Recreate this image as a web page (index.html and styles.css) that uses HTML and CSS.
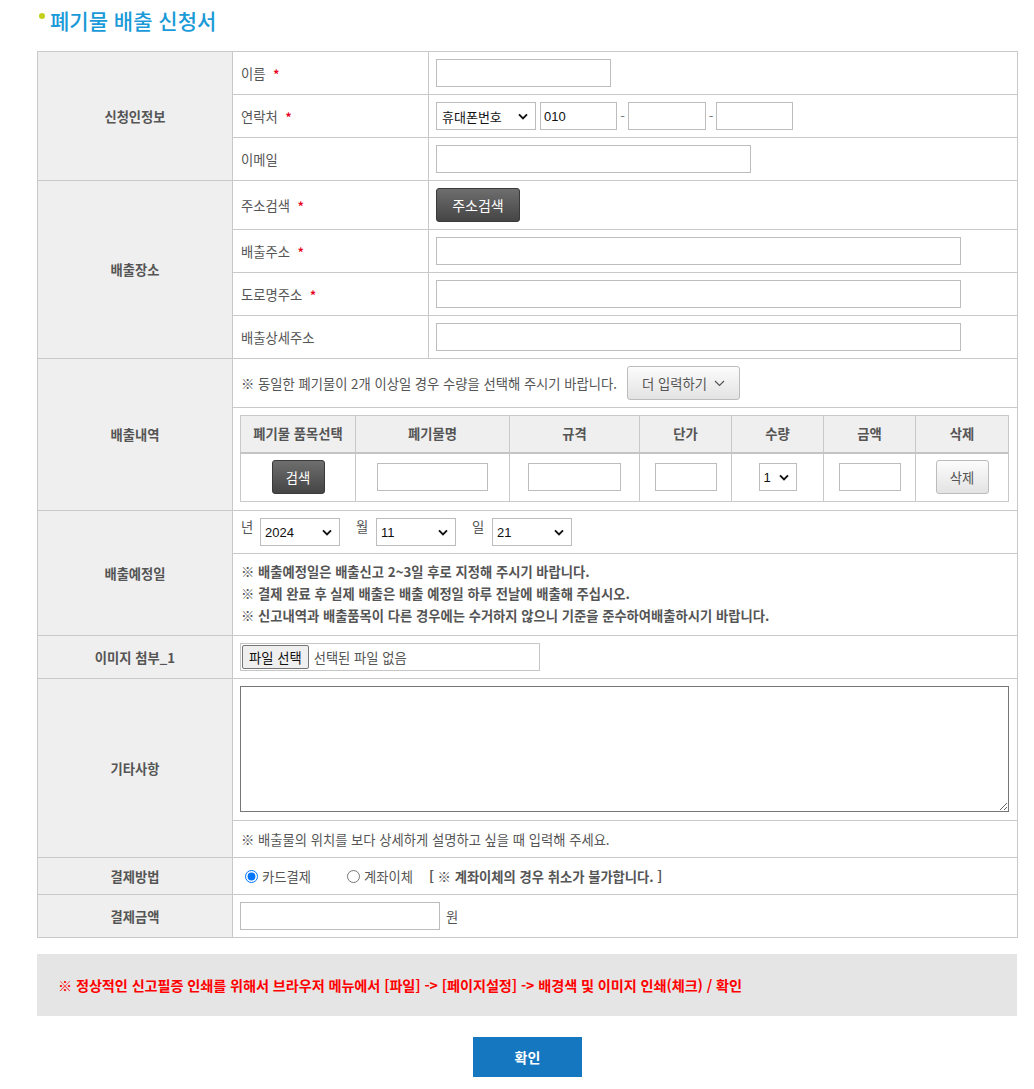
FILE: index.html
```html
<!DOCTYPE html>
<html lang="ko">
<head>
<meta charset="utf-8">
<title>폐기물 배출 신청서</title>
<link rel="stylesheet" href="styles.css">
</head>
<body>
<div class="wrap">
  <h2 class="title"><span class="dot"></span>폐기물 배출 신청서</h2>
  <table class="form">
    <colgroup><col class="c1"><col class="c2"><col class="c3"></colgroup>
    <tr>
      <th rowspan="3">신청인정보</th>
      <td class="lbl">이름 <span class="req">*</span></td>
      <td class="fld"><input class="in w174" type="text"></td>
    </tr>
    <tr>
      <td class="lbl">연락처 <span class="req">*</span></td>
      <td class="fld">
        <div class="row">
          <select class="sel w99"><option>휴대폰번호</option></select>
          <input class="in w76 ml5" type="text" value="010"><span class="dash">-</span><input class="in w77" type="text"><span class="dash d2">-</span><input class="in w76" type="text">
        </div>
      </td>
    </tr>
    <tr>
      <td class="lbl">이메일</td>
      <td class="fld"><input class="in w314" type="text"></td>
    </tr>
    <tr>
      <th rowspan="4">배출장소</th>
      <td class="lbl">주소검색 <span class="req">*</span></td>
      <td class="fld"><button class="btn-dark addr" type="button">주소검색</button></td>
    </tr>
    <tr>
      <td class="lbl">배출주소 <span class="req">*</span></td>
      <td class="fld"><input class="in w524" type="text"></td>
    </tr>
    <tr>
      <td class="lbl">도로명주소 <span class="req">*</span></td>
      <td class="fld"><input class="in w524" type="text"></td>
    </tr>
    <tr>
      <td class="lbl">배출상세주소</td>
      <td class="fld"><input class="in w524" type="text"></td>
    </tr>
    <tr>
      <th rowspan="2">배출내역</th>
      <td class="wide more-row" colspan="2">
        <div class="row">
          <span>※ 동일한 폐기물이 2개 이상일 경우 수량을 선택해 주시기 바랍니다.</span>
          <button class="btn-light more" type="button">더 입력하기 <svg width="11" height="7" viewBox="0 0 11 7"><path d="M1 1l4.5 4.5L10 1" fill="none" stroke="#555" stroke-width="1.2"/></svg></button>
        </div>
      </td>
    </tr>
    <tr>
      <td class="wide items-cell" colspan="2">
        <table class="items">
          <tr>
            <th class="i1">폐기물 품목선택</th>
            <th class="i2">폐기물명</th>
            <th class="i3">규격</th>
            <th class="i4">단가</th>
            <th class="i5">수량</th>
            <th class="i6">금액</th>
            <th class="i7">삭제</th>
          </tr>
          <tr>
            <td><button class="btn-dark small" type="button">검색</button></td>
            <td><input class="in w110" type="text"></td>
            <td><input class="in w92" type="text"></td>
            <td><input class="in w61" type="text"></td>
            <td><select class="sel w37"><option>1</option></select></td>
            <td><input class="in w61" type="text"></td>
            <td><button class="btn-light small" type="button">삭제</button></td>
          </tr>
        </table>
      </td>
    </tr>
    <tr>
      <th rowspan="2">배출예정일</th>
      <td class="wide date" colspan="2">
        <div class="row">
          <span class="dl">년</span><select class="sel w79"><option>2024</option></select>
          <span class="dl">월</span><select class="sel w79"><option>11</option></select>
          <span class="dl">일</span><select class="sel w79"><option>21</option></select>
        </div>
      </td>
    </tr>
    <tr>
      <td class="wide notes" colspan="2">
        <p>※ 배출예정일은 배출신고 2~3일 후로 지정해 주시기 바랍니다.</p>
        <p>※ 결제 완료 후 실제 배출은 배출 예정일 하루 전날에 배출해 주십시오.</p>
        <p>※ 신고내역과 배출품목이 다른 경우에는 수거하지 않으니 기준을 준수하여배출하시기 바랍니다.</p>
      </td>
    </tr>
    <tr>
      <th>이미지 첨부_1</th>
      <td class="wide" colspan="2">
        <label class="file"><span class="file-btn">파일 선택</span><span class="file-txt">선택된 파일 없음</span></label>
      </td>
    </tr>
    <tr>
      <th rowspan="2">기타사항</th>
      <td class="wide ta" colspan="2"><textarea class="memo"></textarea></td>
    </tr>
    <tr>
      <td class="wide note" colspan="2">※ 배출물의 위치를 보다 상세하게 설명하고 싶을 때 입력해 주세요.</td>
    </tr>
    <tr>
      <th>결제방법</th>
      <td class="wide pay" colspan="2">
        <div class="row">
          <label class="radio"><input type="radio" name="pay" checked>카드결제</label>
          <label class="radio second"><input type="radio" name="pay">계좌이체</label>
          <span class="warn">[ ※ 계좌이체의 경우 취소가 불가합니다. ]</span>
        </div>
      </td>
    </tr>
    <tr>
      <th>결제금액</th>
      <td class="wide" colspan="2"><div class="row"><input class="in w199" type="text"><span class="won">원</span></div></td>
    </tr>
  </table>
  <div class="notice">※ 정상적인 신고필증 인쇄를 위해서 브라우저 메뉴에서 [파일] -&gt; [페이지설정] -&gt; 배경색 및 이미지 인쇄(체크) / 확인</div>
  <div class="actions"><button class="submit" type="button">확인</button></div>
</div>
</body>
</html>
```
FILE: styles.css
```css
* { box-sizing: border-box; }
html, body { margin: 0; padding: 0; background: #fff; }
body {
  font-family: "Noto Sans CJK KR", "Noto Sans", sans-serif;
  font-size: 13.3px;
  color: #555;
}
.wrap { width: 980px; margin-left: 37px; }
.title {
  margin: 0;
  height: 51px;
  padding: 4px 0 15px;
  font-size: 21px;
  font-weight: 500;
  color: #1a9ad8;
  line-height: 30px;
  display: flex;
  align-items: center;
}
.dot {
  display: inline-block;
  width: 6px; height: 6px;
  border-radius: 50%;
  background: #c3d11b;
  margin: 0 5px 8px 2px;
}
.row { display: flex; align-items: center; white-space: nowrap; }
.form {
  width: 980px;
  border-collapse: collapse;
  table-layout: fixed;
  border: 1px solid #c6c6c6;
}
.c1 { width: 195px; }
.c2 { width: 196px; }
.c3 { width: 589px; }
.form > tbody > tr > th,
.form > tbody > tr > td { border: 1px solid #c9c9c9; }
.form > tbody > tr > th {
  background: #efefef;
  font-weight: 700;
  color: #555;
  text-align: center;
  vertical-align: middle;
}
.lbl { padding: 7px 8px; height: 43px; vertical-align: middle; }
.req { color: #e8001c; font-weight: 700; margin-left: 4px; font-size: 12px; }
.fld { padding: 7px 7px; vertical-align: middle; }
.wide { padding: 7px 7px; vertical-align: middle; height: 43px; }

.in {
  height: 28px;
  border: 1px solid #bdbdbd;
  background: #fff;
  font: 13px "Liberation Sans", Arial, sans-serif;
  color: #111;
  padding: 0 3px;
  vertical-align: middle;
  margin: 0;
}
.w174 { width: 175px; }
.w76 { width: 77px; }
.w77 { width: 78px; }
.w314 { width: 315px; }
.w524 { width: 525px; }
.w110 { width: 111px; }
.w92 { width: 93px; }
.w61 { width: 62px; }
.w199 { width: 200px; }
.ml5 { margin-left: 4px; }

.sel {
  -webkit-appearance: none;
  appearance: none;
  height: 28px;
  border: 1px solid #bdbdbd;
  background: #fff url("data:image/svg+xml;utf8,<svg xmlns='http://www.w3.org/2000/svg' width='10' height='7' viewBox='0 0 10 7'><path d='M1 1.3l4 4 4-4' fill='none' stroke='%23111' stroke-width='1.9'/></svg>") no-repeat right 7px center;
  font: 13px "Liberation Sans", Arial, sans-serif;
  color: #111;
  padding: 0 20px 0 4px;
  margin: 0;
  vertical-align: middle;
  border-radius: 0;
  flex: none;
}
.sel.w99 { width: 100px; font-family: "Noto Sans CJK KR", sans-serif; padding-left: 5px; }
.sel.w37 { width: 38px; padding-left: 4px; padding-right: 0; }
.sel.w79 { width: 80px; }
.dash { display: inline-block; width: 11px; text-align: center; color: #777; }
.dash.d2 { width: 10px; }

.btn-dark {
  background: linear-gradient(#6e6e6e, #454545);
  border: 1px solid #3a3a3a;
  border-radius: 3px;
  color: #fff;
  font: 13.3px "Noto Sans CJK KR", sans-serif;
  cursor: pointer;
  padding: 0;
}
.btn-dark.addr { width: 84px; height: 34px; font-size: 14px; }
.btn-light {
  background: linear-gradient(#fcfcfc, #e3e3e3);
  border: 1px solid #bcbcbc;
  border-radius: 3px;
  color: #555;
  font: 13.3px "Noto Sans CJK KR", sans-serif;
  cursor: pointer;
  padding: 0;
}
.small { width: 53px; height: 34px; }
.more { width: 113px; height: 34px; margin-left: 10px; display: inline-flex; align-items: center; justify-content: center; gap: 7px; }
.more-row { height: 49px; padding-left: 8px; }

.items-cell { padding: 7px 7px 8px; }
.items { width: 769px; border-collapse: collapse; table-layout: fixed; }
.items th, .items td { border: 1px solid #c9c9c9; text-align: center; vertical-align: middle; }
.items th { background: #efefef; height: 37px; padding: 0; font-weight: 700; color: #555; border-bottom: 2px solid #c4c4c4; }
.items td { height: 49px; padding: 0; }
.i1 { width: 115px; }
.i2 { width: 154px; }
.i3 { width: 130px; }
.i4 { width: 92px; }
.i5 { width: 92px; }
.i6 { width: 92px; }
.i7 { width: 93px; }

.date { padding-left: 8px; }
.dl { width: 19px; align-self: flex-start; margin-top: -1px; }
.date .sel { margin-right: 16px; }
.date .sel ~ .dl { width: 20px; }
.notes { padding: 7px 8px 8px; font-weight: 700; color: #555; }
.notes p { margin: 0; line-height: 22px; }

.file {
  display: inline-flex; align-items: center;
  width: 300px; height: 28px;
  border: 1px solid #c6c6c6;
  padding: 1px;
  vertical-align: middle;
}
.file-btn {
  height: 24px; padding: 0 6px;
  border: 1px solid #767676; border-radius: 2px;
  background: #efefef; color: #111;
  display: inline-flex; align-items: center;
  font-size: 13.3px;
}
.file-txt { margin-left: 5px; color: #555; }

.ta { padding: 7px 8px 8px 7px; height: 142px; }
.memo {
  display: block;
  width: 769px; height: 126px;
  border: 1px solid #767676;
  resize: vertical;
  margin: 0;
  font: 13px "Noto Sans CJK KR", sans-serif;
}
.note { height: 37px; padding: 5px 8px; }
.pay { height: 37px; padding: 4px 6px; }
.radio { display: inline-flex; align-items: center; }
.radio input { margin: 0 4px 0 6px; width: 13px; height: 13px; }
.radio.second { margin-left: 36px; }
.radio.second input { margin-left: 0; margin-right: 4px; }
.warn { font-weight: 700; margin-left: 16px; }
.won { margin-left: 6px; }

.notice {
  margin-top: 16px;
  height: 62px;
  background: #e5e5e5;
  color: #f00;
  font-weight: 700;
  font-size: 14.2px;
  letter-spacing: -0.1px;
  padding-left: 21px;
  display: flex; align-items: center;
}
.actions { display: flex; justify-content: center; margin-top: 21px; padding-left: 1px; }
.submit {
  width: 109px; height: 40px;
  background: #1577c0;
  border: 0;
  color: #fff;
  font: 700 14px "Noto Sans CJK KR", sans-serif;
  cursor: pointer;
}
```
